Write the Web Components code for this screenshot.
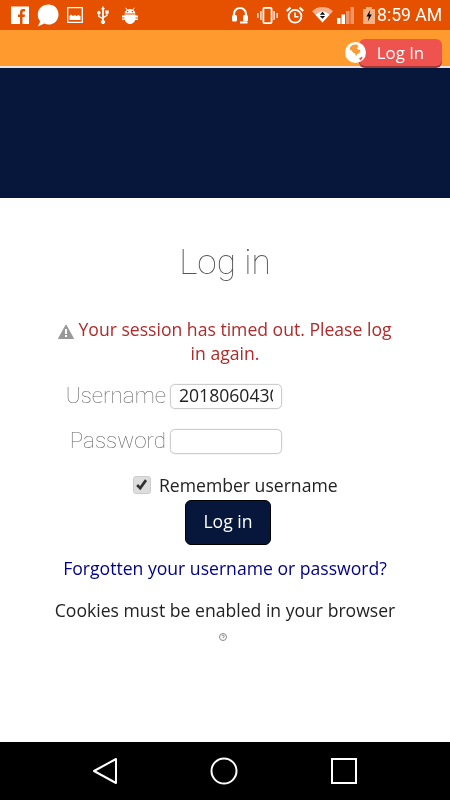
<!DOCTYPE html>
<html>
<head>
<meta charset="utf-8">
<title>Log in</title>
<style>
  html, body { margin: 0; padding: 0; height: 100%; background: #fff; }
  body { width: 450px; height: 800px; overflow: hidden; display: flex; flex-direction: column; font-family: "Open Sans", sans-serif; }
</style>
</head>
<body>
<status-bar></status-bar>
<top-bar></top-bar>
<brand-banner></brand-banner>
<login-page></login-page>
<nav-bar></nav-bar>

<script>
class StatusBar extends HTMLElement {
  constructor() {
    super();
    this.attachShadow({ mode: "open" });
  }
  connectedCallback() {
    this.shadowRoot.innerHTML = `
      <style>
        :host { display: flex; flex: none; height: 30px; background: #e65100; align-items: center; color: #fff; font-family: Roboto, sans-serif; }
        svg { display: block; flex: none; }
        .left { display: flex; align-items: center; padding-left: 11px; }
        .right { display: flex; align-items: center; margin-left: auto; padding-right: 8px; }
        .time { font-size: 17.6px; margin-left: 2px; line-height: 30px; white-space: nowrap; will-change: transform; }
      </style>
      <div class="left">
        <svg width="18" height="18" viewBox="0 0 18 18" style="margin-right:8px"><path fill="#fff" d="M0 .500h18V18H0z"/><path fill="#e65100" d="M9 18v-7H7V8.500h2V6.200C9 4 10.300 3 12.200 3H14v2.500h-1.200c-.9 0-1.300.4-1.300 1.200v1.800H14l-.4 2.500h-2.100v7z"/></svg>
        <svg width="22" height="23" viewBox="0 0 22 23" style="margin-right:8px"><path fill="#fff" d="M11.500 0.500C17.200.5 21.500 4.600 21.500 10.400S17.200 20.500 11.500 20.500c-1.500 0-2.900-.3-4.100-.9L.8 22.500l2.400-5.300C1.500 15.400.8 13 .8 10.400.8 4.600 5.800.5 11.500.5z"/></svg>
        <svg width="16" height="16" viewBox="0 0 16 16" style="margin-right:13px"><path fill="none" stroke="#fff" stroke-width="1.300" d="M.7.700h14.600v14.600H.7z"/><path fill="#fff" d="M2.500 13V9l1.500-1.500L6 9l2-1 1.500 1.200L11 8l2.500 1v4z"/></svg>
        <svg width="14" height="18" viewBox="0 0 14 18" style="margin-right:12px"><path fill="#fff" d="M7 0l2 3.200H7.900v7.300l2.400-1.400V7.600H9.300V4.400h3.400v3.200h-1.100v2.200L7.900 12v2.200a2 2 0 1 1-1.800 0v-1.100L2.200 10.700V8.300a1.700 1.700 0 1 1 1.300 0v1.700l2.600 1.600V3.200H5z"/></svg>
        <svg width="16" height="17" viewBox="0 0 16 17"><path fill="#fff" d="M3.900.6l1.500 2a6 6 0 0 1 5.200 0l1.500-2 .6.4-1.400 2a5.300 5.300 0 0 1 2.200 3.400H2.500A5.300 5.300 0 0 1 4.700 3L3.300 1zM2.500 7.400h11v1H16v2h-2.500v1H16V13h-2.800A6 6 0 0 1 8 17a6 6 0 0 1-5.200-4H0v-1.600h2.500v-1H0v-2h2.500z"/><circle cx="5.600" cy="4.600" r=".8" fill="#e65100"/><circle cx="10.400" cy="4.600" r=".8" fill="#e65100"/></svg>
      </div>
      <div class="right">
        <svg width="16" height="18" viewBox="0 0 16 18" style="margin-right:9px"><path fill="none" stroke="#fff" stroke-width="2.200" d="M2 12V8a6 6 0 0 1 12 0v4"/><rect x="0" y="9" width="5" height="6.500" rx="1.500" fill="#fff"/><rect x="11" y="9" width="5" height="6.500" rx="1.500" fill="#fff"/><path fill="#fff" d="M8 15.500h7.500v2H8z"/></svg>
        <svg width="21" height="17" viewBox="0 0 21 17" style="margin-right:8px"><rect x="6.400" y=".9" width="8.200" height="15.200" rx="1" fill="none" stroke="#fff" stroke-width="1.800"/><path fill="none" stroke="#fff" stroke-width="1.500" opacity=".85" d="M3.900 4v9M.8 6v5M17.100 4v9M20.200 6v5"/></svg>
        <svg width="18" height="18" viewBox="0 0 18 18" style="margin-right:8px"><circle cx="9" cy="10.300" r="6.400" fill="none" stroke="#fff" stroke-width="1.800"/><path fill="none" stroke="#fff" stroke-width="1.500" d="M9 6.500v4.300h3.500"/><path fill="none" stroke="#fff" stroke-width="2.200" d="M.8 5L4.500 1.500M17.200 5L13.500 1.500"/></svg>
        <svg width="21" height="16" viewBox="0 0 21 16" style="margin-right:4px"><path fill="#fff" opacity=".55" d="M10.500 0C6.300 0 2.700 1.400 0 4.300L3.300 7.700C5.300 5.900 7.700 5 10.500 5s5.200.9 7.200 2.700L21 4.300C18.300 1.400 14.700 0 10.500 0z"/><path fill="#fff" d="M10.500 15.500L3.300 7.700C5.300 5.900 7.700 4.500 10.500 4.500s5.200 1.400 7.200 3.200z"/><path fill="#111" d="M10.500 4.800l2.700 2.900H7.800zM7.800 8.900h5.400l-2.700 2.900z"/></svg>
        <svg width="17" height="17" viewBox="0 0 17 17" style="margin-right:9px"><path fill="#fff" d="M0 11h3.500v6H0zM4.500 7.500H8V17H4.500z"/><path fill="#fff" opacity=".4" d="M9 4h3.500v13H9zM13.500 0H17v17h-3.500z"/></svg>
        <svg width="12" height="17" viewBox="0 0 12 17"><path fill="#f5b183" d="M0 2h3V0h6v2h3v15H0z"/><path fill="#000" d="M7.200 3L3.500 9.500h2.300L4.800 14.500 8.800 7.500H6.400z"/></svg>
        <span class="time">8:59 AM</span>
      </div>
    `;
  }
}

class LanguageGlobe extends HTMLElement {
  constructor() {
    super();
    this.attachShadow({ mode: "open" });
  }
  connectedCallback() {
    this.shadowRoot.innerHTML = `
      <style>
        :host { display: block; width: 21px; height: 21px; }
        svg { display: block; }
      </style>
      <svg width="21" height="21" viewBox="0 0 21 21">
        <circle cx="10.500" cy="10.500" r="10.500" fill="#fff"/>
        <path fill="#fb9a33" d="M5 5.500c1.500-2.500 5-3.500 7.500-2.500l1 2-2 1 1.500 1.500 2.500.5-1 3-2.500 1-.8 2.500-1.200-3-2.500-1.500-.5-1.500-2-.5z"/>
        <path fill="#ef5350" d="M14 16.500l3-2 .5 1.500-2 2.500z"/>
      </svg>
    `;
  }
}

class TopBar extends HTMLElement {
  constructor() {
    super();
    this.attachShadow({ mode: "open" });
  }
  connectedCallback() {
    this.shadowRoot.innerHTML = `
      <style>
        :host { display: flex; flex: none; height: 36px; background: #ff9a2e; border-bottom: 2px solid #e4e4e4; position: relative; justify-content: flex-end; }
        .btn { font-family: "Open Sans", sans-serif; font-size: 16.8px; color: #fff; background: #ef5350; border-radius: 6px; box-shadow: 0 2px 0 #9c3b3a; width: 83px; height: 27px; margin: 9px 8px 0 0; line-height: 28px; text-align: center; }
        .btn span { display: block; will-change: transform; }
        language-globe { position: absolute; left: 345px; top: 12px; z-index: 1; }
      </style>
      <language-globe></language-globe>
      <div class="btn"><span>Log In</span></div>
    `;
  }
}

class BrandBanner extends HTMLElement {
  constructor() {
    super();
    this.attachShadow({ mode: "open" }).innerHTML = `
      <style>:host { display: block; flex: none; height: 130px; background: #07173b; }</style>
    `;
  }
}

class LoginField extends HTMLElement {
  constructor() {
    super();
    this.attachShadow({ mode: "open" });
  }
  connectedCallback() {
    const value = this.getAttribute("value") || "";
    this.shadowRoot.innerHTML = `
      <style>
        :host { display: flex; height: 45px; align-items: center; }
        label { width: 166px; text-align: right; font: 100 22.4px/30px Roboto, sans-serif; color: #666; flex: none; }
        .box { margin: 4px 0 0 4px; width: 112px; height: 25px; box-sizing: border-box; border: 1px solid #ccc; border-radius: 5px; box-shadow: 0 0 1px #bbb; padding: 0 8px; }
        .value { display: block; height: 23px; overflow: hidden; white-space: nowrap; font: 17.6px/21px "Open Sans", sans-serif; color: #222; }
      </style>
      <label><slot></slot></label>
      <div class="box"><span class="value">${value}</span></div>
    `;
  }
}

class LoginPage extends HTMLElement {
  constructor() {
    super();
    this.attachShadow({ mode: "open" });
  }
  connectedCallback() {
    this.shadowRoot.innerHTML = `
      <style>
        :host { display: flex; flex-direction: column; flex: 1; color: #222; font-family: "Open Sans", sans-serif; font-size: 17.6px; will-change: transform; }
        h1 { margin: 40px 0 0; font: 100 35.2px/48px Roboto, sans-serif; color: #555; text-align: center; }
        .error { margin: 31px 55px 0 55px; text-align: center; line-height: 24px; color: #b12a2a; }
        .error svg { vertical-align: -3px; margin-right: 4px; }
        .fields { margin-top: 7px; }
        .remember { display: flex; align-items: center; height: 26px; margin: 10px 0 0 133px; }
        .check { width: 18px; height: 18px; box-sizing: border-box; background: #ddd; border: 1px solid #ccc; border-radius: 3px; margin-right: 8px; display: block; }
        .submit { align-self: flex-start; margin: 2px 0 0 185px; width: 86px; height: 45px; box-sizing: border-box; background: #07173b; color: #fff; border-radius: 6px; border: 1px solid #000; text-align: center; line-height: 40px; }
        .forgot { margin-top: 11px; text-align: center; line-height: 25px; color: #00008b; }
        .cookies { margin-top: 17px; text-align: center; line-height: 25px; }
        .help { display: block; margin: 10px 0 0 219px; }
      </style>
      <h1>Log in</h1>
      <div class="error"><svg width="16" height="15" viewBox="0 0 16 15"><path fill="#999" stroke="#999" stroke-linejoin="round" d="M8 1l7.500 13.500H.5z"/><path fill="#fff" d="M7 5h2v5H7zM7 11h2v2H7z"/></svg>Your session has timed out. Please log in again.</div>
      <div class="fields">
        <login-field value="2018060430">Username</login-field>
        <login-field>Password</login-field>
      </div>
      <div class="remember">
        <svg class="check" viewBox="0 0 18 18"><path fill="none" stroke="#333" stroke-width="3" d="M3.500 9l3.500 3.500 6.500-9"/></svg>
        Remember username
      </div>
      <div class="submit">Log in</div>
      <div class="forgot">Forgotten your username or password?</div>
      <div class="cookies">Cookies must be enabled in your browser</div>
      <svg class="help" width="8" height="8" viewBox="0 0 8 8"><circle cx="4" cy="4" r="3.500" fill="none" stroke="#888"/><path fill="none" stroke="#888" d="M2.800 3.200a1.200 1.200 0 1 1 1.200 1.300V5.200"/></svg>
    `;
  }
}

class NavBar extends HTMLElement {
  constructor() {
    super();
    this.attachShadow({ mode: "open" });
  }
  connectedCallback() {
    this.shadowRoot.innerHTML = `
      <style>
        :host { display: flex; flex: none; height: 58px; background: #000; align-items: center; padding-left: 92px; }
        svg { display: block; flex: none; }
      </style>
      <svg width="26" height="28" viewBox="0 0 26 28" style="margin-right:92px"><path fill="none" stroke="#fff" stroke-width="2" stroke-linejoin="round" d="M24 2v24L2 14z"/></svg>
      <svg width="28" height="28" viewBox="0 0 28 28" style="margin-right:92px"><circle cx="14" cy="14" r="12.500" fill="none" stroke="#fff" stroke-width="2"/></svg>
      <svg width="28" height="28" viewBox="0 0 28 28"><path fill="none" stroke="#fff" stroke-width="2" d="M2 2h24v24H2z"/></svg>
    `;
  }
}

customElements.define("status-bar", StatusBar);
customElements.define("language-globe", LanguageGlobe);
customElements.define("top-bar", TopBar);
customElements.define("brand-banner", BrandBanner);
customElements.define("login-field", LoginField);
customElements.define("login-page", LoginPage);
customElements.define("nav-bar", NavBar);
</script>
</body>
</html>
